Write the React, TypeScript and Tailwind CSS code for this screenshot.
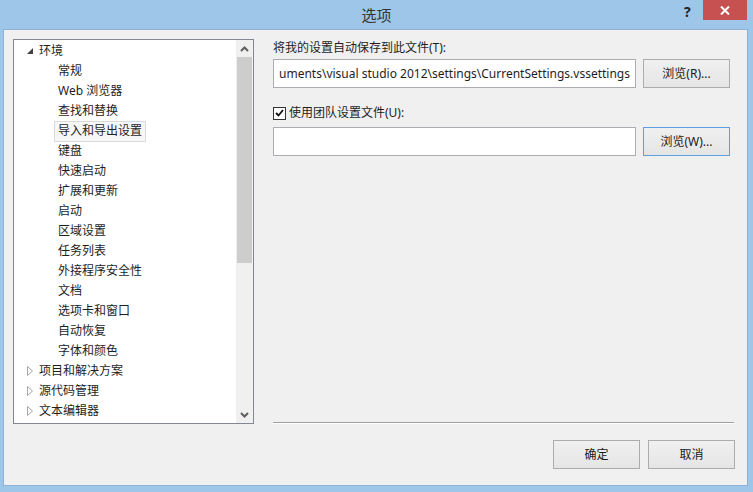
import React from "react";

const font = { fontFamily: '"Noto Sans", "Noto Sans CJK SC", sans-serif' };

type Node = { label: string; level: 0 | 1; expander?: "open" | "closed"; selected?: boolean };

const nodes: Node[] = [
  { label: "环境", level: 0, expander: "open" },
  { label: "常规", level: 1 },
  { label: "Web 浏览器", level: 1 },
  { label: "查找和替换", level: 1 },
  { label: "导入和导出设置", level: 1, selected: true },
  { label: "键盘", level: 1 },
  { label: "快速启动", level: 1 },
  { label: "扩展和更新", level: 1 },
  { label: "启动", level: 1 },
  { label: "区域设置", level: 1 },
  { label: "任务列表", level: 1 },
  { label: "外接程序安全性", level: 1 },
  { label: "文档", level: 1 },
  { label: "选项卡和窗口", level: 1 },
  { label: "自动恢复", level: 1 },
  { label: "字体和颜色", level: 1 },
  { label: "项目和解决方案", level: 0, expander: "closed" },
  { label: "源代码管理", level: 0, expander: "closed" },
  { label: "文本编辑器", level: 0, expander: "closed" },
];

function Expander({ kind }: { kind?: "open" | "closed" }) {
  if (kind === "open") {
    return (
      <svg width="6" height="6" viewBox="0 0 6 6" className="shrink-0">
        <polygon points="6,0 6,6 0,6" fill="#404040" />
      </svg>
    );
  }
  return (
    <svg width="6" height="10" viewBox="0 0 6 10" className="shrink-0">
      <polygon points="0.5,0.5 5.5,5 0.5,9.5" fill="none" stroke="#a6a6a6" />
    </svg>
  );
}

function Button({ children, focused }: { children: React.ReactNode; focused?: boolean }) {
  return (
    <div
      className={`w-[87px] h-[29px] flex items-center justify-center text-[12px] text-[#1a1a1a] border bg-gradient-to-b from-[#f0f0f0] to-[#e5e5e5] ${
        focused ? "border-[#5b9fe2]" : "border-[#acacac]"
      }`}
    >
      {children}
    </div>
  );
}

export default function App() {
  return (
    <div className="w-[753px] h-[492px] bg-[#9ec6e9] flex flex-col overflow-hidden select-none" style={font}>
      {/* Title bar */}
      <div className="h-[29px] relative flex items-center justify-center">
        <span className="text-[15px] text-[#333] pt-[1px]">选项</span>
        <span className="absolute left-[684px] top-[1px] text-[14px] font-bold text-[#222]">?</span>
        <div className="absolute left-[703px] top-0 w-[44px] h-[20px] bg-[#c75050] flex items-center justify-center">
          <svg width="10" height="9" viewBox="0 0 10 9">
            <path d="M1 0.5 L9 8.5 M9 0.5 L1 8.5" stroke="#fff" strokeWidth="2" />
          </svg>
        </div>
      </div>

      {/* Client area */}
      <div className="ml-[3px] w-[745px] h-[457px] border border-[#8db2d6] bg-[#f0f0f0] flex flex-col">
        <div className="flex mt-[9px] ml-[9px] h-[385px]">
          {/* Tree */}
          <div className="w-[241px] h-[385px] border border-[#828790] bg-white flex">
            <div className="flex-1 pt-[1px] overflow-hidden">
              {nodes.map((n) => (
                <div key={n.label} className="h-[20px] flex items-center text-[12px] text-[#1e1e1e]">
                  {n.level === 0 ? (
                    <>
                      <div className="w-[25px] flex justify-end pr-[6px]">
                        <Expander kind={n.expander} />
                      </div>
                      <span>{n.label}</span>
                    </>
                  ) : n.selected ? (
                    <span className="ml-[40px] px-[3px] h-[21px] flex items-center border border-[#dadada] bg-[#f7f7f7]">
                      {n.label}
                    </span>
                  ) : (
                    <span className="ml-[44px]">{n.label}</span>
                  )}
                </div>
              ))}
            </div>
            {/* Scrollbar */}
            <div className="w-[17px] bg-[#f0f0f0] flex flex-col">
              <div className="h-[17px] flex items-center justify-center">
                <svg width="9" height="6" viewBox="0 0 9 6">
                  <path d="M1 5 L4.5 1.5 L8 5" fill="none" stroke="#606060" strokeWidth="2" />
                </svg>
              </div>
              <div className="mx-[1px] h-[206px] bg-[#cdcdcd]" />
              <div className="flex-1" />
              <div className="h-[17px] flex items-center justify-center">
                <svg width="9" height="6" viewBox="0 0 9 6">
                  <path d="M1 1 L4.5 4.5 L8 1" fill="none" stroke="#606060" strokeWidth="2" />
                </svg>
              </div>
            </div>
          </div>

          {/* Right panel */}
          <div className="ml-[19px] w-[461px] flex flex-col text-[12px] text-[#1e1e1e]">
            <div className="h-[18px] leading-[18px]">将我的设置自动保存到此文件(T):</div>
            <div className="mt-[2px] flex gap-[7px]">
              <div className="w-[363px] h-[29px] border border-[#abadb3] bg-white flex items-center justify-end overflow-hidden pr-[5px]">
                <span className="whitespace-nowrap text-[12px] text-[#1e1e1e]">
                  uments\visual studio 2012\settings\CurrentSettings.vssettings
                </span>
              </div>
              <Button>浏览(R)...</Button>
            </div>
            <div className="mt-[16px] h-[18px] flex items-center gap-[3px]">
              <div className="w-[13px] h-[13px] border border-[#333] bg-white flex items-center justify-center">
                <svg width="9" height="8" viewBox="0 0 9 8">
                  <path d="M1 4 L3.5 6.5 L8 1" fill="none" stroke="#111" strokeWidth="1.8" />
                </svg>
              </div>
              <span>使用团队设置文件(U):</span>
            </div>
            <div className="mt-[5px] flex gap-[7px] items-end">
              <div className="w-[363px] h-[29px] border border-[#abadb3] bg-white" />
              <div className="-mt-[1px]">
                <Button focused>浏览(W)...</Button>
              </div>
            </div>
            <div className="flex-1" />
            <div className="border-t border-[#a0a0a0] border-b border-b-white" />
          </div>
        </div>

        {/* Bottom buttons */}
        <div className="mt-[16px] flex justify-end gap-[8px] pr-[12px]">
          <Button>确定</Button>
          <Button>取消</Button>
        </div>
      </div>
    </div>
  );
}
